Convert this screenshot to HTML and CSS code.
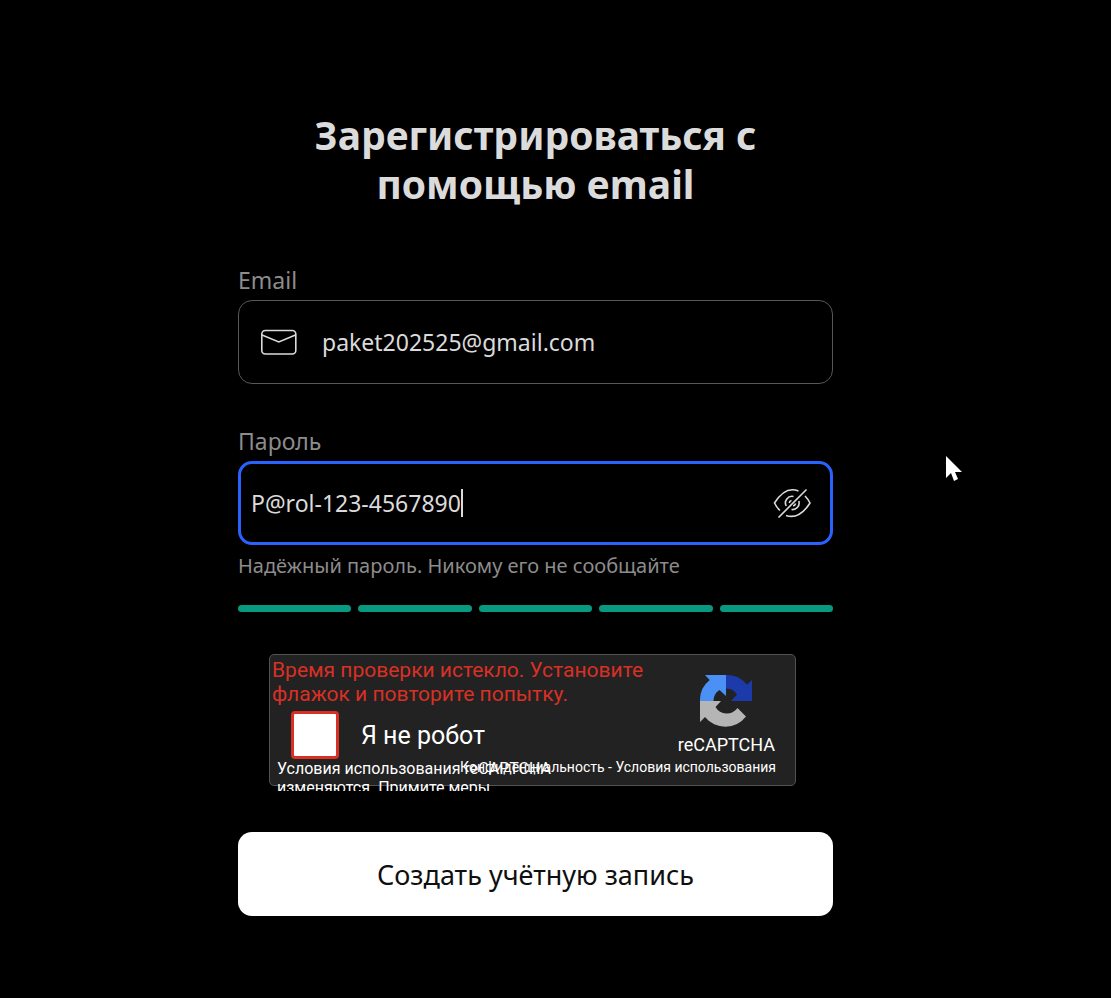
FILE: index.html
```
<!DOCTYPE html>
<html lang="ru">

<head>
  <meta charset="UTF-8" />
  <meta name="viewport" content="width=device-width, initial-scale=1.0" />
  <title>Регистрация</title>
  <link rel="stylesheet" href="styles.css">
</head>

<body>
  <main class="page">
    <form class="signup">
      <h1 class="title">Зарегистрироваться с помощью email</h1>

      <div class="field">
        <label class="label" for="email">Email</label>
        <div class="control">
          <svg class="icon-mail" viewBox="0 0 36 26" fill="none" stroke="#dbdbdb" stroke-width="1.6">
            <rect x=".8" y="1.500" width="34" height="23.500" rx="3.5" />
            <path d="M1 6 17.800 13 34.500 6" />
          </svg>
          <input class="input" id="email" type="email" value="paket202525@gmail.com" />
        </div>
      </div>

      <div class="field">
        <label class="label" for="password">Пароль</label>
        <div class="control active">
          <input class="input fit" id="password" type="text" value="P@rol-123-4567890" />
          <span class="caret"></span>
          <button class="toggle" type="button" aria-label="Скрыть пароль">
            <svg class="icon-eye" viewBox="0 0 38 30" fill="none" stroke="#dbdbdb" stroke-width="1.6">
              <path d="M7 22.500Q4 20 1.500 15C9 3 17-.5 25.500 3M32 8Q35 11 37 15C30 26 22 30.500 13 27.500" />
              <path d="M13.200 18A6.600 6.600 0 0 1 20.500 8.500M25.800 13A6.600 6.600 0 0 1 18.500 21.500" />
              <path d="M16.300 15A3 3 0 0 1 18.500 12.600M22.600 15.500A3 3 0 0 1 20 17.800" />
              <path d="M5.500 29.500 33.500 1.500" />
            </svg>
          </button>
        </div>
        <p class="hint">Надёжный пароль. Никому его не сообщайте</p>
        <div class="strength"><span></span><span></span><span></span><span></span><span></span></div>
      </div>

      <div class="captcha">
        <div class="captcha-box">
          <div class="captcha-main">
            <p class="captcha-error">Время проверки истекло. Установите флажок и повторите попытку.</p>
            <label class="robot"><input class="check" type="checkbox" />Я не робот</label>
          </div>
          <div class="brand">
            <svg class="logo" viewBox="0 0 52 52">
              <path fill="#4a90f5" d="M0 26A26 26 0 0 1 9.700 5L5 0H26V21L19.500 15A12.500 12.500 0 0 0 13.500 26Z" />
              <path fill="#1c3aa9" d="M26 0A26 26 0 0 1 47 9.700L52 5V26H31L37 19.500A12.500 12.500 0 0 0 26 13.500Z" />
              <path fill="#b5b5b5" d="M0 26V47L5 42A26 26 0 0 0 46 41.500L37.500 33A13 13 0 0 1 15.500 32L21 26Z" />
            </svg>
            <span>reCAPTCHA</span>
          </div>
        </div>
        <p class="notice">Условия использования reCAPTCHA изменяются. Примите меры</p>
        <div class="links"><a href="#">Конфиденциальность</a> - <a href="#">Условия использования</a></div>
      </div>

      <button class="submit" type="submit">Создать учётную запись</button>
    </form>
  </main>
  <svg class="pointer" viewBox="0 0 18 26">
    <path fill="#fff" d="M1 0V22L6 17 9 25 13 23 10 16H17Z" />
  </svg>
</body>

</html>
```
FILE: styles.css
```
:root {
  --bg: #000;
  --text: #dbdbdb;
  --muted: #8c8c8c;
  --line: #575757;
  --focus: #2962ff;
  --good: #089981;
}

* {
  box-sizing: border-box;
}

body {
  margin: 0;
  background: var(--bg);
  color: var(--text);
  font-family: "Trebuchet MS", "Noto Sans", sans-serif;
}

h1,
p {
  margin: 0;
}

.page {
  display: flex;
  justify-content: center;
  padding: 110px 40px 82px 0;
}

.signup {
  display: flex;
  flex-direction: column;
  width: 100%;
  max-width: 595px;
}

.title {
  padding: 0 56px;
  margin-bottom: 57px;
  font-size: 39px;
  line-height: 49px;
  text-align: center;
}

.field {
  margin-bottom: 42px;
}

.label {
  display: block;
  padding-bottom: 5px;
  color: var(--muted);
  font-size: 23px;
  line-height: 30px;
}

.control {
  display: flex;
  align-items: center;
  height: 84px;
  padding: 0 22px;
  border: 1px solid var(--line);
  border-radius: 14px;
}

.control.active {
  padding: 0 19px 0 10px;
  border: 3px solid var(--focus);
}

.icon-mail {
  flex: none;
  width: 36px;
  height: 26px;
  margin-right: 25px;
}

.input {
  flex: 1;
  min-width: 0;
  padding: 0;
  border: 0;
  outline: 0;
  background: none;
  color: var(--text);
  font: inherit;
  font-size: 23px;
}

.input.fit {
  flex: none;
  field-sizing: content;
}

.caret {
  width: 2px;
  height: 28px;
  background: var(--text);
}

.toggle {
  display: flex;
  margin-left: auto;
  padding: 0;
  border: 0;
  background: none;
}

.icon-eye {
  width: 38px;
  height: 30px;
}

.hint {
  margin: 7px 0 25px;
  color: var(--muted);
  font-size: 20px;
  line-height: 28px;
}

.strength {
  display: flex;
  gap: 7px;
}

.strength span {
  flex: 1;
  height: 7px;
  border-radius: 4px;
  background: var(--good);
}

.captcha {
  position: relative;
  height: 137px;
  margin: 0 37px 41px 31px;
  overflow: hidden;
  color: #fff;
  font-family: Roboto, sans-serif;
}

.captcha-box {
  display: flex;
  justify-content: space-between;
  height: 132px;
  padding: 3px 20px 0 2px;
  border: 1px solid #525252;
  border-radius: 5px;
  background: #222;
}

.captcha-main {
  width: 390px;
}

.captcha-error {
  color: #d93025;
  font-size: 21px;
  line-height: 24px;
}

.robot {
  display: flex;
  align-items: center;
  gap: 22px;
  margin: 5px 19px;
  font-size: 25px;
}

.check {
  appearance: none;
  width: 48px;
  height: 48px;
  margin: 0;
  border: 3px solid #d93025;
  border-radius: 4px;
  background: #fff;
}

.brand {
  display: flex;
  flex-direction: column;
  align-items: center;
  padding-top: 17px;
  font-size: 18px;
  line-height: 20px;
}

.logo {
  width: 52px;
  height: 52px;
  margin-bottom: 8px;
}

/* both footers share the same strip and run over each other */
.notice {
  position: absolute;
  top: 105px;
  left: 8px;
  width: 300px;
  font-size: 16px;
  line-height: 19px;
}

.links {
  position: absolute;
  top: 104px;
  right: 20px;
  font-size: 14px;
  line-height: 18px;
}

.links a {
  color: inherit;
  text-decoration: none;
}

.submit {
  height: 84px;
  border: 0;
  border-radius: 14px;
  background: #fff;
  color: #0f0f0f;
  font: inherit;
  font-size: 27px;
}

.pointer {
  position: absolute;
  top: 456px;
  left: 945px;
  width: 18px;
  height: 26px;
}
```
